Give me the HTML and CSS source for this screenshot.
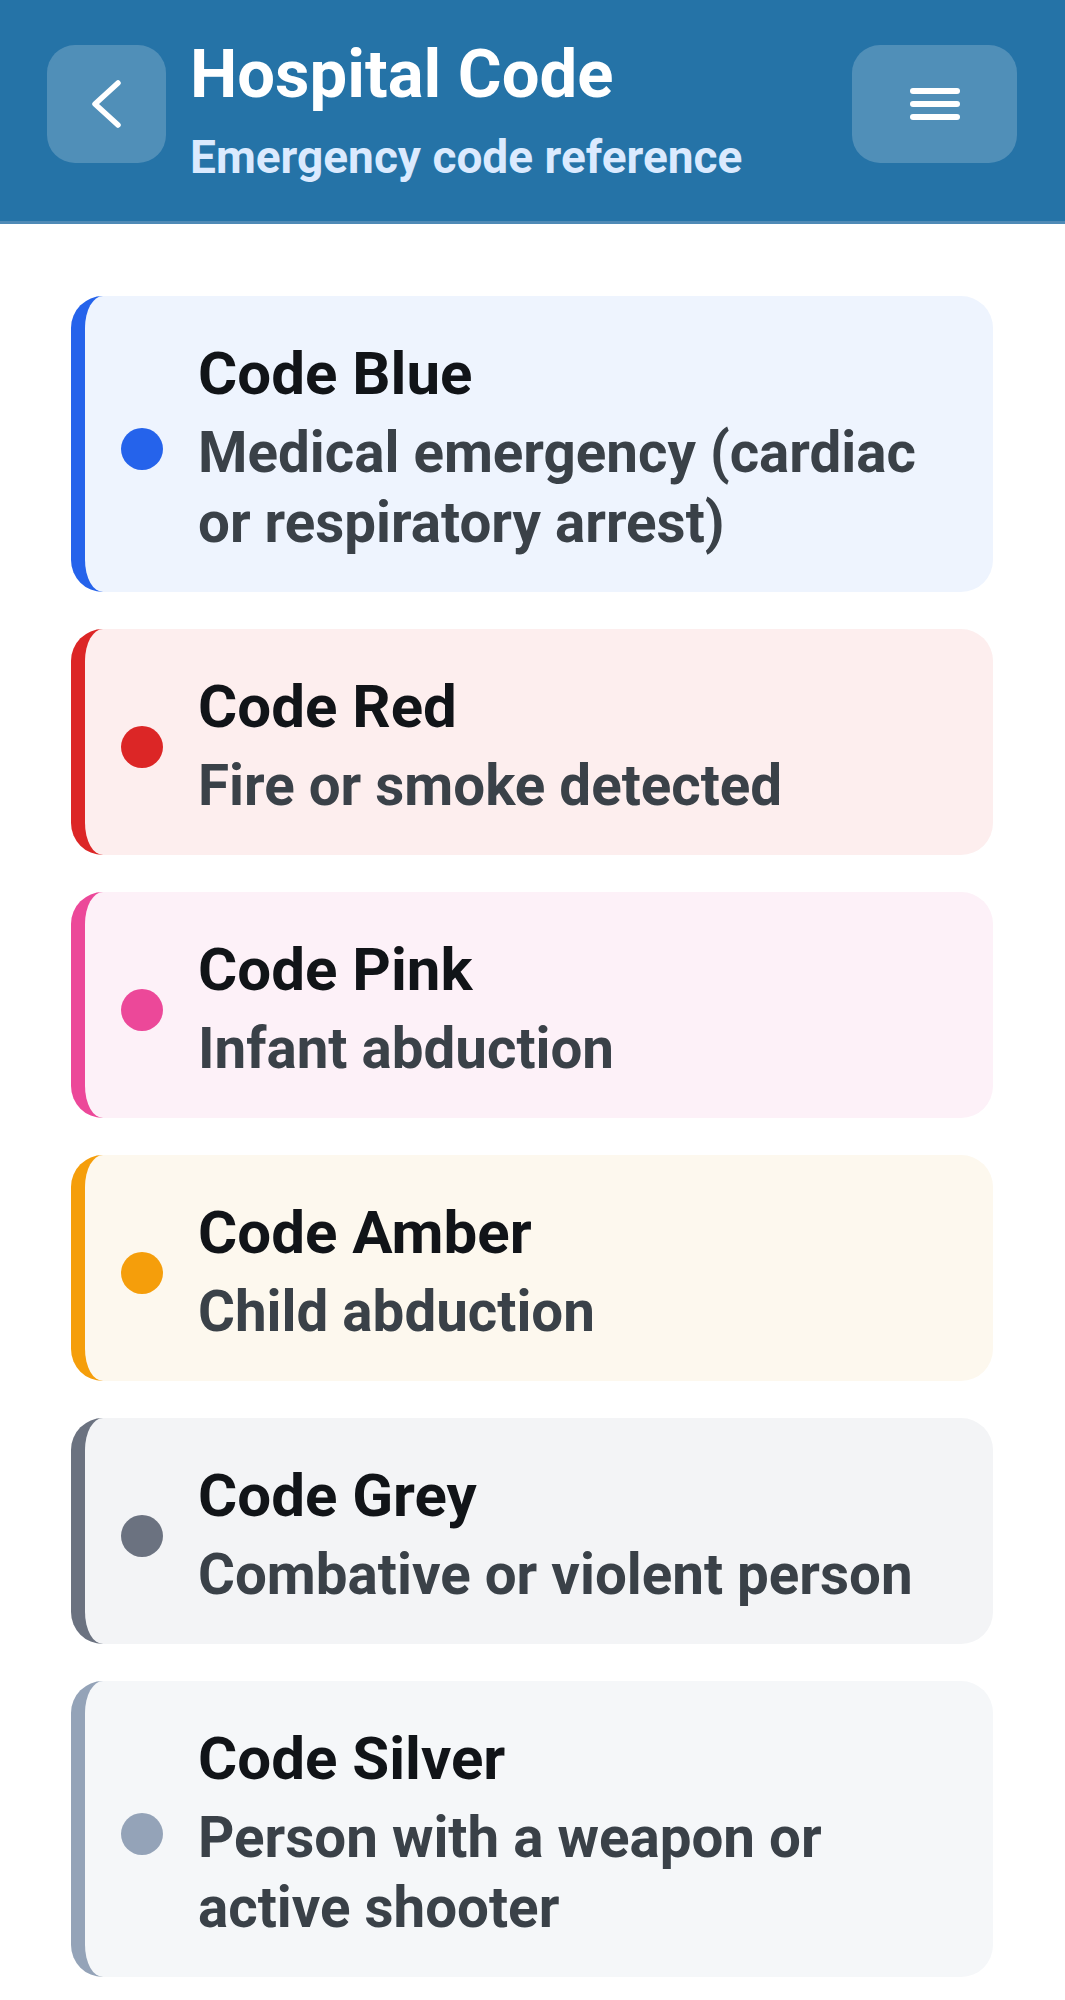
FILE: index.html
```html
<!DOCTYPE html>
<html lang="en">
<head>
  <meta charset="UTF-8">
  <meta name="viewport" content="width=device-width, initial-scale=1.0">
  <title>Hospital Code</title>
  <link rel="stylesheet" href="styles.css">
</head>
<body>
  <!-- Top bar -->
  <header class="topbar">
    <button class="icon-btn back-btn" type="button" aria-label="Back">
      <svg width="30" height="50" viewBox="0 0 30 50">
        <polyline points="26,4 3,25 26,46" fill="none" stroke="#fff" stroke-width="5.5" stroke-linecap="round" stroke-linejoin="round"/>
      </svg>
    </button>
    <div class="topbar-text">
      <h1 class="topbar-title">Hospital Code</h1>
      <p class="topbar-subtitle">Emergency code reference</p>
    </div>
    <button class="icon-btn menu-btn" type="button" aria-label="Menu">
      <svg width="56" height="40" viewBox="0 0 56 40">
        <g stroke="#fff" stroke-width="6" stroke-linecap="round">
          <line x1="6" y1="7" x2="50" y2="7"/>
          <line x1="6" y1="20" x2="50" y2="20"/>
          <line x1="6" y1="33" x2="50" y2="33"/>
        </g>
      </svg>
    </button>
  </header>

  <!-- Code list -->
  <main class="code-list">
    <div class="code-card code-blue">
      <span class="dot"></span>
      <div class="code-text">
        <h2 class="code-name">Code Blue</h2>
        <p class="code-desc">Medical emergency (cardiac or respiratory arrest)</p>
      </div>
    </div>

    <div class="code-card code-red">
      <span class="dot"></span>
      <div class="code-text">
        <h2 class="code-name">Code Red</h2>
        <p class="code-desc">Fire or smoke detected</p>
      </div>
    </div>

    <div class="code-card code-pink">
      <span class="dot"></span>
      <div class="code-text">
        <h2 class="code-name">Code Pink</h2>
        <p class="code-desc">Infant abduction</p>
      </div>
    </div>

    <div class="code-card code-amber">
      <span class="dot"></span>
      <div class="code-text">
        <h2 class="code-name">Code Amber</h2>
        <p class="code-desc">Child abduction</p>
      </div>
    </div>

    <div class="code-card code-grey">
      <span class="dot"></span>
      <div class="code-text">
        <h2 class="code-name">Code Grey</h2>
        <p class="code-desc">Combative or violent person</p>
      </div>
    </div>

    <div class="code-card code-silver">
      <span class="dot"></span>
      <div class="code-text">
        <h2 class="code-name">Code Silver</h2>
        <p class="code-desc">Person with a weapon or active shooter</p>
      </div>
    </div>
  </main>
</body>
</html>
```

FILE: styles.css
```css
body {
  margin: 0;
  font-family: Roboto, "Noto Sans", Arial, sans-serif;
  background-color: #fff;
}

/* Top bar */
.topbar {
  display: flex;
  align-items: flex-start;
  padding: 35px 48px 37px 47px;
  background-color: #2573a7;
  border-bottom: 3px solid #4f8ab6;
}
.icon-btn {
  display: flex;
  align-items: center;
  justify-content: center;
  flex-shrink: 0;
  height: 118px;
  margin-top: 10px;
  padding: 0;
  border: none;
  border-radius: 28px;
  background-color: rgba(255, 255, 255, 0.2);
  cursor: pointer;
}
.back-btn {
  width: 119px;
}
.menu-btn {
  width: 165px;
  margin-left: auto;
}
.topbar-text {
  margin-left: 24px;
}
.topbar-title {
  margin: 0;
  font-size: 67px;
  line-height: 79px;
  font-weight: 700;
  color: #fff;
}
.topbar-subtitle {
  margin: 16px 0 0;
  font-size: 46px;
  line-height: 54px;
  font-weight: 700;
  color: #dbeafe;
}

/* Code cards */
.code-list {
  display: flex;
  flex-direction: column;
  gap: 37px;
  padding: 72px 72px 40px 71px;
}
.code-card {
  display: flex;
  align-items: center;
  gap: 35px;
  padding: 43px 36px 34px 36px;
  border-left: 14px solid;
  border-radius: 32px;
}
.dot {
  flex-shrink: 0;
  width: 42px;
  height: 42px;
  border-radius: 50%;
}
.code-name {
  margin: 0 0 9px;
  font-size: 60px;
  line-height: 70px;
  font-weight: 700;
  color: #111418;
}
.code-desc {
  margin: 0;
  font-size: 56.5px;
  line-height: 70px;
  font-weight: 700;
  color: #3a4148;
}

.code-blue { background-color: #eef4fe; border-color: #2563eb; }
.code-blue .dot { background-color: #2563eb; }
.code-red { background-color: #fdeeee; border-color: #dc2626; }
.code-red .dot { background-color: #dc2626; }
.code-pink { background-color: #fdf1f8; border-color: #ec4899; }
.code-pink .dot { background-color: #ec4899; }
.code-amber { background-color: #fdf8ee; border-color: #f59e0b; }
.code-amber .dot { background-color: #f59e0b; }
.code-grey { background-color: #f3f4f6; border-color: #6b7280; }
.code-grey .dot { background-color: #6b7280; }
.code-silver { background-color: #f5f7f9; border-color: #94a3b8; }
.code-silver .dot { background-color: #94a3b8; }
```
